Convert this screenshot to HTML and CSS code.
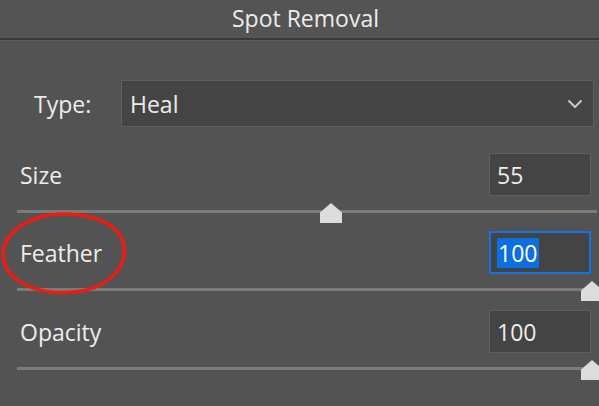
FILE: index.html
```html
<!DOCTYPE html>
<html>
<head>
<meta charset="utf-8">
<link rel="stylesheet" href="styles.css">
</head>
<body>
<div class="panel">
  <div class="header">Spot Removal</div>
  <div class="type-row">
    <span class="type-label">Type:</span>
    <div class="select">
      <span>Heal</span>
      <svg class="chev" width="16" height="10" viewBox="0 0 16 10"><path d="M1.5 1.5 L8 8 L14.5 1.5" fill="none" stroke="#c8c8c8" stroke-width="2"/></svg>
    </div>
  </div>

  <div class="param">
    <div class="param-row">
      <span class="label">Size</span>
      <div class="field"><span>55</span></div>
    </div>
    <div class="slider">
      <div class="track"></div>
      <div class="thumb" style="left: 332px"></div>
    </div>
  </div>

  <div class="param">
    <div class="param-row">
      <span class="label">Feather</span>
      <div class="field active"><span class="sel">100</span></div>
    </div>
    <div class="slider">
      <div class="track"></div>
      <div class="thumb" style="left: 593px"></div>
    </div>
  </div>

  <div class="param">
    <div class="param-row">
      <span class="label">Opacity</span>
      <div class="field"><span>100</span></div>
    </div>
    <div class="slider">
      <div class="track"></div>
      <div class="thumb" style="left: 593px"></div>
    </div>
  </div>

  <svg class="circle" width="140" height="100" viewBox="0 0 140 100">
    <path d="M34 14 C 60 4, 110 8, 122 34 C 132 60, 108 84, 74 87 C 38 91, 4 76, 3 50 C 3 30, 22 16, 48 10" fill="none" stroke="#ec1c12" stroke-width="3.6" stroke-linecap="round"/>
  </svg>
</div>
</body>
</html>
```
FILE: styles.css
```css
html, body {
  margin: 0;
  padding: 0;
  background: #535353;
}
body {
  width: 599px;
  height: 406px;
  overflow: hidden;
  font-family: "Open Sans", "Noto Sans", "DejaVu Sans", sans-serif;
  color: #ededed;
}
.panel {
  position: relative;
  width: 599px;
  height: 406px;
}
.header {
  height: 40px;
  border-bottom: 2px solid #3b3b3b;
  box-shadow: 0 1px 0 #5c5c5c;
  background: #545454;
  text-align: center;
  font-size: 23px;
  line-height: 36px;
  padding-left: 12px;
  box-sizing: border-box;
}
.type-row {
  display: flex;
  align-items: center;
  margin-top: 40px;
  padding-left: 34px;
}
.type-label {
  font-size: 23px;
  width: 87px;
}
.select {
  box-sizing: border-box;
  width: 473px;
  height: 47px;
  background: #454545;
  border: 1px solid #5f5f5f;
  display: flex;
  align-items: center;
  justify-content: space-between;
  padding: 0 10px 0 8px;
  font-size: 23px;
}
.chev {
  display: block;
}
.param {
  padding-left: 20px;
}
.param-row {
  display: flex;
  align-items: center;
  justify-content: space-between;
  padding-right: 8px;
  height: 43px;
}
.label {
  font-size: 23px;
}
.field {
  box-sizing: border-box;
  width: 102px;
  height: 43px;
  background: #444444;
  border: 1px solid #5f5f5f;
  display: flex;
  align-items: center;
  padding-left: 7px;
  font-size: 23px;
}
.field.active {
  border: 2px solid #1473e6;
  padding-left: 6px;
}
.sel {
  background: #0c6fe0;
  color: #ffffff;
  padding: 0 2px 0 1px;
  line-height: 30px;
}
.param:nth-of-type(3) { margin-top: 26px; }
.param:nth-of-type(4) .param-row { margin-top: 15px; }
.param:nth-of-type(5) .param-row { margin-top: 16px; }
.slider {
  position: relative;
  height: 20px;
  margin-left: -3px;
}
.track {
  position: absolute;
  left: 0;
  right: 2px;
  top: 14px;
  height: 3px;
  background: #7b7b7b;
}
.thumb {
  position: absolute;
  top: 7px;
  width: 22px;
  height: 20px;
  margin-left: -29px;
  background: #dcdcdc;
  clip-path: polygon(50% 0, 100% 48%, 100% 100%, 0 100%, 0 48%);
  filter: drop-shadow(0 1px 0 #1e1e1e);
}
.circle {
  position: absolute;
  left: 0;
  top: 205px;
}
```
